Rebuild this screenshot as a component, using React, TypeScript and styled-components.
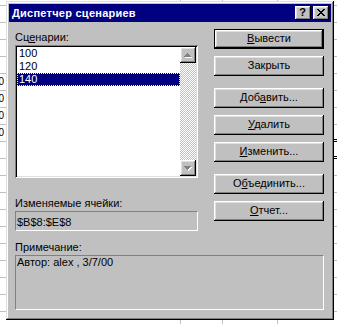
import React from "react";
import styled, { createGlobalStyle, css } from "styled-components";

const GlobalStyle = createGlobalStyle`
  html, body { margin: 0; padding: 0; background: #fff; }
  body { font-family: "Liberation Sans", Arial, sans-serif; }
  * { box-sizing: border-box; }
`;

const GRID = "#c0c0c0";

const Sheet = styled.div`
  position: relative;
  width: 337px;
  height: 324px;
  overflow: hidden;
  background-color: #fff;
  background-image: linear-gradient(
    to right,
    transparent 180px,
    ${GRID} 180px 181px,
    transparent 181px 222px,
    ${GRID} 222px 223px,
    transparent 223px 277px,
    ${GRID} 277px 278px,
    transparent 278px
  );
  display: flex;
  flex-direction: column;
`;

const SheetRow = styled.div<{ $first?: boolean }>`
  height: ${(p) => (p.$first ? 6 : 17)}px;
  flex: none;
  border-bottom: 1px solid ${GRID};
  display: flex;
`;

const NumCell = styled.div`
  width: 6px;
  overflow: hidden;
  display: flex;
  justify-content: flex-end;
  font-family: "Liberation Sans", Arial, sans-serif;
  font-size: 10px;
  line-height: 16px;
  color: #000;
  white-space: nowrap;
`;

const NumText = styled.span`
  padding-right: 2px;
`;

const EdgeCell = styled.div`
  margin-left: auto;
  width: 6px;
  align-self: stretch;
  margin-bottom: -1px;
  border-bottom: 3px double #000;
`;

const Dialog = styled.div`
  position: absolute;
  left: 6px;
  top: 1px;
  width: 328px;
  height: 319px;
  padding: 3px;
  background: #c0c0c0;
  box-shadow: inset -1px -1px #000, inset 1px 1px #dfdfdf,
    inset -2px -2px #808080, inset 2px 2px #fff;
  display: flex;
  flex-direction: column;
  color: #000;
  font-size: 11px;
`;

const TitleBar = styled.div`
  height: 18px;
  flex: none;
  background: #000080;
  display: flex;
  align-items: center;
  padding: 0 2px 0 3px;
`;

const TitleText = styled.span`
  color: #fff;
  font-weight: bold;
  font-size: 11px;
  letter-spacing: 0.25px;
  line-height: 13px;
`;

const CaptionButtons = styled.div`
  margin-left: auto;
  display: flex;
  gap: 2px;
`;

const bevel = css`
  background: #c0c0c0;
  box-shadow: inset -1px -1px #000, inset 1px 1px #fff,
    inset -2px -2px #808080, inset 2px 2px #dfdfdf;
`;

const CaptionButton = styled.div`
  ${bevel};
  width: 16px;
  height: 14px;
  display: flex;
  align-items: center;
  justify-content: center;
  font-weight: bold;
  font-size: 11px;
  line-height: 11px;
  padding: 0 1px 1px 0;
`;

const Body = styled.div`
  flex: 1;
  display: flex;
  flex-direction: column;
  padding: 7px 7px 7px 6px;
`;

const TopGrid = styled.div`
  display: grid;
  grid-template-columns: 183px 110px;
  column-gap: 16px;
  align-items: start;
`;

const LeftCol = styled.div`
  display: flex;
  flex-direction: column;
  padding-top: 2px;
`;

const Label = styled.div<{ $gap?: number }>`
  height: 13px;
  line-height: 13px;
  font-size: 11px;
  margin-top: ${(p) => p.$gap ?? 0}px;
  white-space: nowrap;
`;

const ListBox = styled.div`
  height: 133px;
  margin-top: 1px;
  padding: 2px;
  background: #fff;
  box-shadow: inset 1px 1px #808080, inset -1px -1px #fff,
    inset 2px 2px #000, inset -2px -2px #dfdfdf;
  display: flex;
`;

const Items = styled.div`
  flex: 1;
  display: flex;
  flex-direction: column;
`;

const Item = styled.div<{ $selected?: boolean }>`
  height: 13px;
  line-height: 13px;
  padding-left: 2px;
  font-size: 11px;
  ${(p) =>
    p.$selected &&
    css`
      background: #000080;
      color: #fff;
      outline: 1px dotted #ffff80;
      outline-offset: -1px;
    `}
`;

const ScrollBar = styled.div`
  width: 16px;
  display: flex;
  flex-direction: column;
  justify-content: space-between;
  background: repeating-conic-gradient(#fff 0 25%, #c0c0c0 0 50%) 0 0 / 2px 2px;
`;

const ScrollButton = styled.div`
  ${bevel};
  width: 16px;
  height: 16px;
  display: flex;
  align-items: center;
  justify-content: center;
`;

const Field = styled.div`
  height: 20px;
  margin-top: 1px;
  border-top: 1px solid #808080;
  border-left: 1px solid #808080;
  border-bottom: 1px solid #fff;
  border-right: 1px solid #fff;
  padding: 4px 1px 0;
  line-height: 13px;
  font-size: 11px;
  white-space: nowrap;
`;

const Note = styled(Field)`
  height: 55px;
  padding: 0 1px;
`;

const ButtonCol = styled.div`
  display: flex;
  flex-direction: column;
`;

const Button = styled.div<{ $gap?: number; $default?: boolean }>`
  height: 20px;
  margin-top: ${(p) => p.$gap ?? 0}px;
  display: flex;
  align-items: center;
  justify-content: center;
  font-size: 11px;
  line-height: 13px;
  padding-bottom: 1px;
  background: #c0c0c0;
  box-shadow: ${(p) =>
    p.$default
      ? "inset 0 0 0 1px #000, inset -2px -2px #000, inset 2px 2px #fff, inset -3px -3px #808080, inset 3px 3px #dfdfdf"
      : "inset -1px -1px #000, inset 1px 1px #fff, inset -2px -2px #808080, inset 2px 2px #dfdfdf"};
  u {
    text-decoration: underline;
    text-underline-offset: 1px;
  }
`;

const NoteSection = styled.div`
  display: flex;
  flex-direction: column;
`;

const upPath = "M3 0h1v1H3z M2 1h3v1H2z M1 2h5v1H1z M0 3h7v1H0z";
const downPath = "M0 0h7v1H0z M1 1h5v1H1z M2 2h3v1H2z M3 3h1v1H3z";
const closePath =
  "M0 0h2v1H0z M6 0h2v1H6z M1 1h2v1H1z M5 1h2v1H5z M2 2h4v1H2z M3 3h2v1H3z M2 4h4v1H2z M1 5h2v1H1z M5 5h2v1H5z M0 6h2v1H0z M6 6h2v1H6z";

const Arrow: React.FC<{ d: string }> = ({ d }) => (
  <svg width="8" height="5" viewBox="0 0 8 5" shapeRendering="crispEdges">
    <path d={d} fill="#fff" transform="translate(1 1)" />
    <path d={d} fill="#808080" />
  </svg>
);

const sheetRows: (string | null)[] = [
  null, null, null, null, "100", "120", "140", "100", null, null,
  null, null, null, null, null, null, null, null, null, null,
];

export default function App() {
  return (
    <>
      <GlobalStyle />
      <Sheet>
        <SheetRow $first />
        {sheetRows.map((v, i) => (
          <SheetRow key={i}>
            <NumCell>{v && <NumText>{v}</NumText>}</NumCell>
            {(i === 7 || i === 8) && <EdgeCell />}
          </SheetRow>
        ))}
        <Dialog>
          <TitleBar>
            <TitleText>Диспетчер сценариев</TitleText>
            <CaptionButtons>
              <CaptionButton>?</CaptionButton>
              <CaptionButton>
                <svg width="8" height="7" viewBox="0 0 8 7" shapeRendering="crispEdges">
                  <path d={closePath} fill="#000" />
                </svg>
              </CaptionButton>
            </CaptionButtons>
          </TitleBar>
          <Body>
            <TopGrid>
              <LeftCol>
                <Label>
                  Сц<u>е</u>нарии:
                </Label>
                <ListBox>
                  <Items>
                    <Item>100</Item>
                    <Item>120</Item>
                    <Item $selected>140</Item>
                  </Items>
                  <ScrollBar>
                    <ScrollButton>
                      <Arrow d={upPath} />
                    </ScrollButton>
                    <ScrollButton>
                      <Arrow d={downPath} />
                    </ScrollButton>
                  </ScrollBar>
                </ListBox>
                <Label $gap={19}>Изменяемые ячейки:</Label>
                <Field>$B$8:$E$8</Field>
              </LeftCol>
              <ButtonCol>
                <Button $default>
                  <span><u>В</u>ывести</span>
                </Button>
                <Button $gap={7}>Закрыть</Button>
                <Button $gap={12}>
                  <span>Доб<u>а</u>вить...</span>
                </Button>
                <Button $gap={7}>
                  <span><u>У</u>далить</span>
                </Button>
                <Button $gap={7}>
                  <span><u>И</u>зменить...</span>
                </Button>
                <Button $gap={12}>
                  <span>О<u>б</u>ъединить...</span>
                </Button>
                <Button $gap={7}>
                  <span><u>О</u>тчет...</span>
                </Button>
              </ButtonCol>
            </TopGrid>
            <NoteSection>
              <Label $gap={10}>Примечание:</Label>
              <Note>Автор: alex , 3/7/00</Note>
            </NoteSection>
          </Body>
        </Dialog>
      </Sheet>
    </>
  );
}
